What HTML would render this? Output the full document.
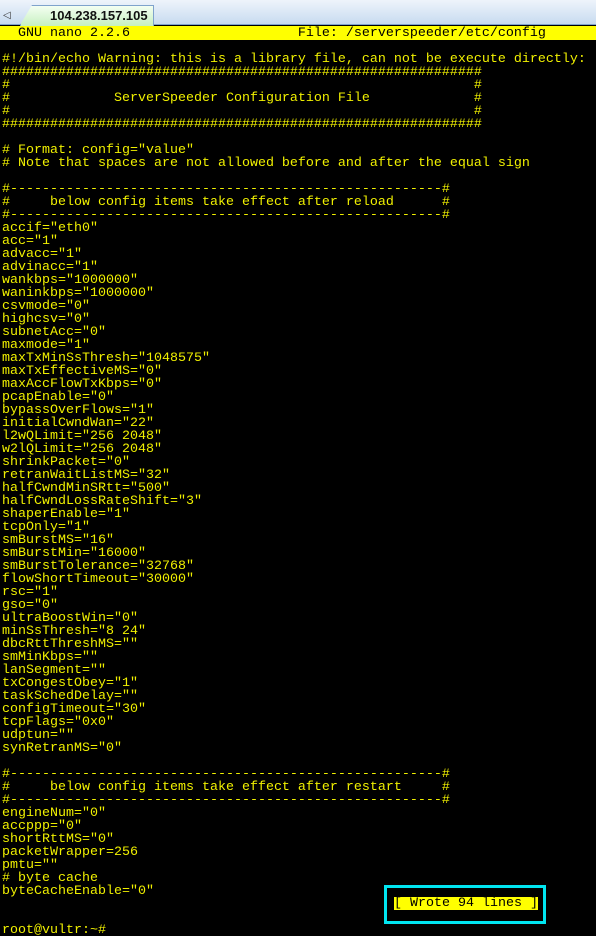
<!DOCTYPE html>
<html><head><meta charset="utf-8"><style>
html,body{margin:0;padding:0;background:#000;width:596px;height:936px;overflow:hidden;position:relative}
.tabbar{position:absolute;left:0;top:0;width:596px;height:24px;background:linear-gradient(#eef4fb,#c8dbf0);border-bottom:1px solid #7fa3cc}
.tab{position:absolute;left:20px;top:5px;width:132px;height:20px;background:linear-gradient(#f4fff2,#c6f0c0);border:1px solid #7fa3cc;border-bottom:none;clip-path:polygon(12px 0,100% 0,100% 100%,0 100%,0 20px);}
.tabtxt{position:absolute;left:50px;top:8px;font:bold 13px "Liberation Sans",sans-serif;color:#111}
.arrow{position:absolute;left:3px;top:10px;font:10px "Liberation Sans",sans-serif;color:#333}
.title{position:absolute;left:0;top:26px;width:596px;height:14px;background:#ffff00}
pre{position:absolute;left:2px;top:27px;margin:0;font-family:"Liberation Mono",monospace;font-size:13.33px;line-height:13px;color:#f0f000;white-space:pre}
.t{color:#000}
.wrote{position:absolute;left:394px;top:897px;height:13px;width:144px;background:#ffff00;color:#000;font-family:"Liberation Mono",monospace;font-size:13.33px;line-height:13px;white-space:pre}
.box{position:absolute;left:384px;top:885px;width:156px;height:33px;border:3px solid #00e5f0}
</style></head><body>
<div class="tabbar"></div>
<div class="arrow">◁</div>
<div class="tab"></div>
<div class="tabtxt">104.238.157.105</div>
<div class="title"></div>
<pre><span class="t">  GNU nano 2.2.6                     File: /serverspeeder/etc/config</span>

#!/bin/echo Warning: this is a library file, can not be execute directly:
############################################################
#                                                          #
#             ServerSpeeder Configuration File             #
#                                                          #
############################################################

# Format: config="value"
# Note that spaces are not allowed before and after the equal sign

#------------------------------------------------------#
#     below config items take effect after reload      #
#------------------------------------------------------#
accif="eth0"
acc="1"
advacc="1"
advinacc="1"
wankbps="1000000"
waninkbps="1000000"
csvmode="0"
highcsv="0"
subnetAcc="0"
maxmode="1"
maxTxMinSsThresh="1048575"
maxTxEffectiveMS="0"
maxAccFlowTxKbps="0"
pcapEnable="0"
bypassOverFlows="1"
initialCwndWan="22"
l2wQLimit="256 2048"
w2lQLimit="256 2048"
shrinkPacket="0"
retranWaitListMS="32"
halfCwndMinSRtt="500"
halfCwndLossRateShift="3"
shaperEnable="1"
tcpOnly="1"
smBurstMS="16"
smBurstMin="16000"
smBurstTolerance="32768"
flowShortTimeout="30000"
rsc="1"
gso="0"
ultraBoostWin="0"
minSsThresh="8 24"
dbcRttThreshMS=""
smMinKbps=""
lanSegment=""
txCongestObey="1"
taskSchedDelay=""
configTimeout="30"
tcpFlags="0x0"
udptun=""
synRetranMS="0"

#------------------------------------------------------#
#     below config items take effect after restart     #
#------------------------------------------------------#
engineNum="0"
accppp="0"
shortRttMS="0"
packetWrapper=256
pmtu=""
# byte cache
byteCacheEnable="0"


root@vultr:~#</pre>
<div class="wrote">[ Wrote 94 lines ]</div>
<div class="box"></div>
</body></html>
